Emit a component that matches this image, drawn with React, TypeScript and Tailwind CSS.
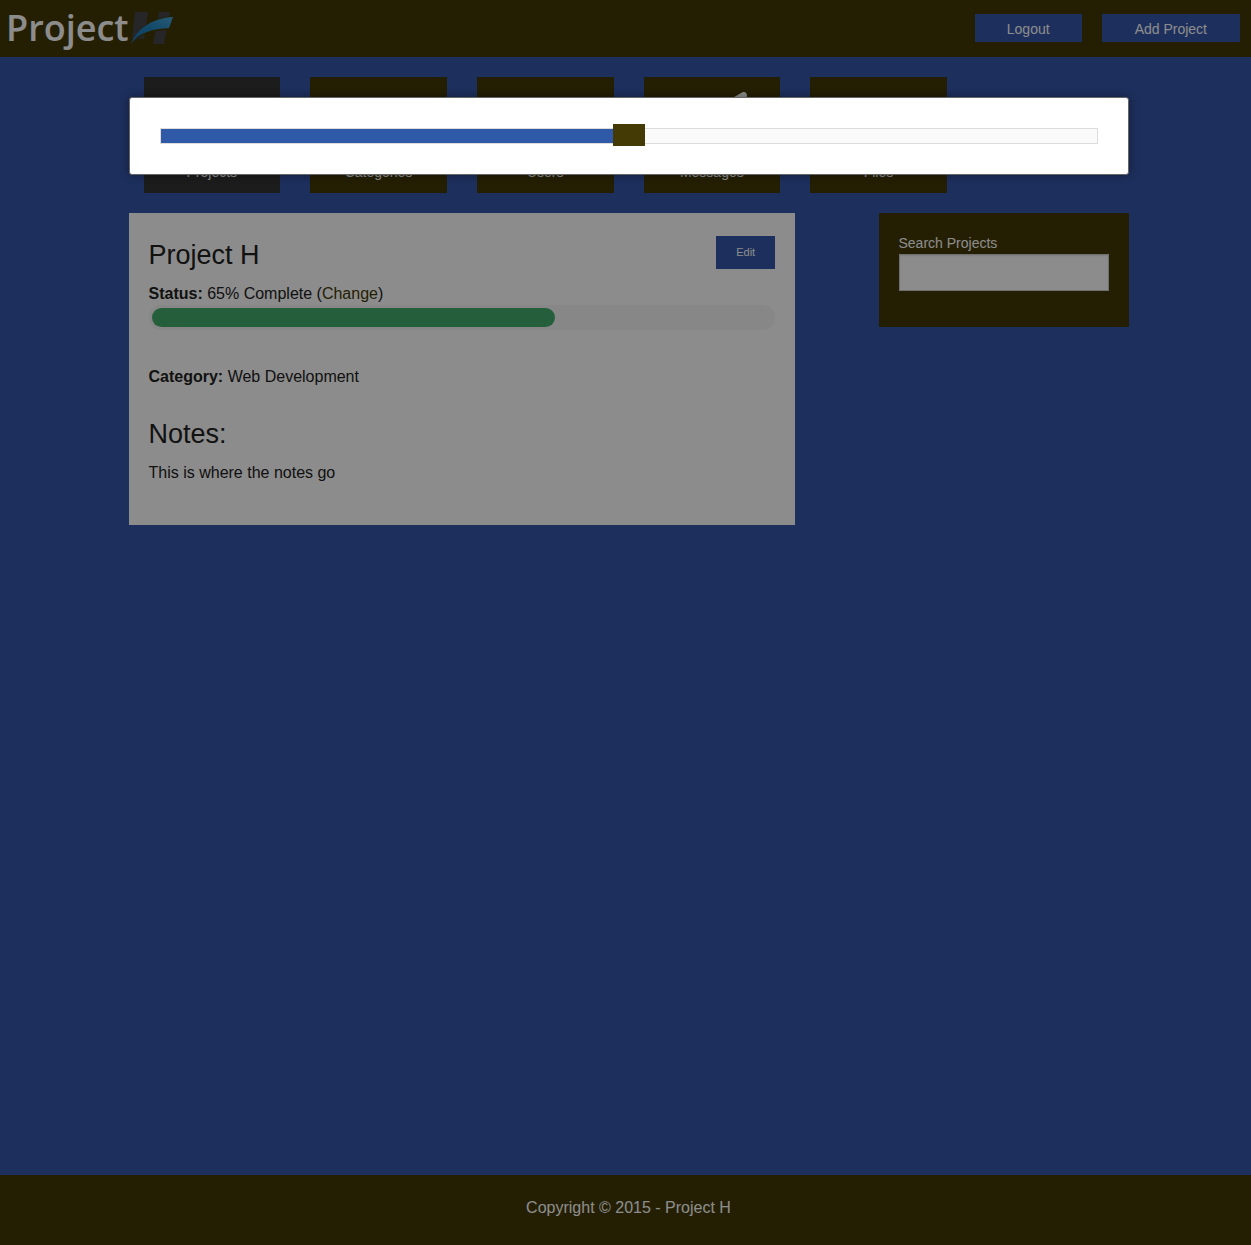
import { useState } from "react";
import type { CSSProperties } from "react";
import type { IconType } from "react-icons";
import { FaFolder, FaFolderOpen, FaList, FaPaperPlane, FaUsers } from "react-icons/fa";

const tiles: { label: string; Icon: IconType; active?: boolean }[] = [
  { label: "Projects", Icon: FaFolderOpen, active: true },
  { label: "Categories", Icon: FaList },
  { label: "Users", Icon: FaUsers },
  { label: "Messages", Icon: FaPaperPlane },
  { label: "Files", Icon: FaFolder },
];

function Logo() {
  return (
    <a href="#" className="flex items-center gap-0.5 pl-1.5 text-white" aria-label="Project H">
      <span className="font-['Open_Sans',sans-serif] text-[36px] leading-[54px] font-semibold">Project</span>
      <svg className="mt-0.5" width="44" height="34" viewBox="0 0 44 34" aria-hidden="true">
        <path d="M4 0H17L13 27H1z" fill="#45454c" />
        <path d="M28 0H39L33 32H22z" fill="#45454c" />
        <path d="M0 33C5 18 20 5 43 4L38 18C22 19 9 21 0 33z" fill="#433a06" />
        <path d="M0 32C5 18 20 6 42 5L38 16C22 17 8 20 0 32z" fill="url(#swoosh)" />
        <defs>
          <linearGradient id="swoosh" x1="0" y1="1" x2="1" y2="0">
            <stop offset="0" stopColor="#1e70b0" />
            <stop offset="0.5" stopColor="#2084bf" />
            <stop offset="1" stopColor="#48a4d4" />
          </linearGradient>
        </defs>
      </svg>
    </a>
  );
}

function Header() {
  return (
    <header className="flex h-[57px] items-center justify-between bg-[#433a06] pr-[11px] pb-px">
      <Logo />
      <div className="flex gap-5 text-sm text-white">
        <button className="h-7 bg-[#3557a9] px-8 pt-0.5">Logout</button>
        <button className="h-7 bg-[#3557a9] px-[33px] pt-0.5">Add Project</button>
      </div>
    </header>
  );
}

function ProjectCard() {
  return (
    <section className="w-2/3 bg-white px-5 pt-[23px] pb-10 text-[#222]">
      <div className="flex items-start justify-between">
        <h1 className="mb-2 text-[27px] leading-[38px]">Project H</h1>
        <button className="h-[33px] bg-[#3557a9] px-5 text-[11px] text-white">Edit</button>
      </div>
      <p>
        <strong>Status:</strong> 65% Complete (
        <a href="#" className="text-[#433a06]">Change</a>)
      </p>
      <div
        role="progressbar"
        aria-label="Project status"
        aria-valuenow={65}
        className="-mt-px h-[25px] rounded-xl bg-[#f6f6f6] p-[3px]"
      >
        <div className="h-full w-[65%] rounded-[10px] bg-[#43ac6a]" />
      </div>
      <p className="mt-[35px]">
        <strong>Category:</strong> Web Development
      </p>
      <h2 className="mt-[26px] mb-2 text-[27px] leading-[38px]">Notes:</h2>
      <p>This is where the notes go</p>
    </section>
  );
}

function StatusModal() {
  const [value, setValue] = useState(50);
  return (
    <div className="absolute inset-0 bg-black/45 pt-[97px] pl-[7px]">
      <div
        role="dialog"
        aria-label="Change status"
        className="mx-auto max-w-[1000px] rounded-[3px] border border-[#666] bg-white p-[30px] shadow-[0_0_10px_rgba(0,0,0,0.4)]"
      >
        <input
          type="range"
          aria-label="Percent complete"
          value={value}
          onChange={(e) => setValue(Number(e.target.value))}
          style={{ "--fill": `${value}%` } as CSSProperties}
          className="block h-4 w-full appearance-none bg-transparent [&::-webkit-slider-runnable-track]:box-border [&::-webkit-slider-runnable-track]:h-4 [&::-webkit-slider-runnable-track]:border [&::-webkit-slider-runnable-track]:border-[#ddd] [&::-webkit-slider-runnable-track]:bg-[linear-gradient(to_right,#3059a8_var(--fill),#fafafa_var(--fill))] [&::-webkit-slider-thumb]:-mt-[5px] [&::-webkit-slider-thumb]:h-[22px] [&::-webkit-slider-thumb]:w-8 [&::-webkit-slider-thumb]:appearance-none [&::-webkit-slider-thumb]:bg-[#433a06]"
        />
      </div>
    </div>
  );
}

export default function App() {
  return (
    <div className="relative flex min-h-screen flex-col bg-[#3557a9] font-['Liberation_Sans',Arial,sans-serif] text-base">
      <Header />
      <main className="flex-1 py-5 pl-1.5">
        <div className="mx-auto max-w-[1000px]">
          <nav className="grid grid-cols-6">
            {tiles.map(({ label, Icon, active }) => (
              <div key={label} className="px-[15px]">
                <a
                  href="#"
                  className={`flex flex-col items-center pt-[15px] pb-[11px] text-sm leading-[19px] text-white ${active ? "bg-[#333]" : "bg-[#433a06]"}`}
                >
                  <Icon size={71} />
                  {label}
                </a>
              </div>
            ))}
          </nav>
          <div className="mt-5 flex items-start justify-between">
            <ProjectCard />
            <aside className="w-1/4 bg-[#433a06] px-5 pt-5 pb-9">
              <label htmlFor="search" className="block text-sm leading-[21px] text-white">
                Search Projects
              </label>
              <input
                id="search"
                type="text"
                className="block h-[37px] w-full border border-[#ccc] bg-white px-2 shadow-[inset_0_1px_2px_rgba(0,0,0,0.1)]"
              />
            </aside>
          </div>
        </div>
      </main>
      <footer className="bg-[#433a06] pt-[21px] pb-[25px] pl-1.5 text-center text-white">
        Copyright © 2015 - Project H
      </footer>
      <StatusModal />
    </div>
  );
}
